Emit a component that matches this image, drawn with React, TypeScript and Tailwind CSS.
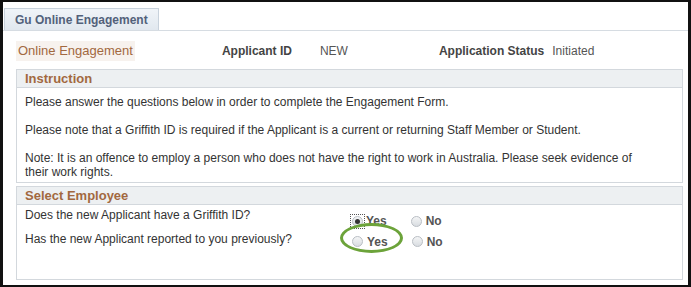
import React from "react";

function Radio({ checked, focused }: { checked?: boolean; focused?: boolean }) {
  return (
    <span className={`inline-flex items-center justify-center w-[13px] h-[13px] ${focused ? "outline outline-1 outline-dotted outline-[#555]" : ""}`}>
      <span className="w-[11px] h-[11px] rounded-full border border-[#b9bec4] bg-gradient-to-b from-[#f4f5f6] to-[#d9dde1] flex items-center justify-center">
        {checked && <span className="w-[5px] h-[5px] rounded-full bg-[#333]" />}
      </span>
    </span>
  );
}

function SectionHeader({ title }: { title: string }) {
  return (
    <div className="h-[18px] bg-[#edf0f2] border-b border-[#d3d8dd] px-[8px] flex items-center">
      <span className="text-[13px] font-bold text-[#a2683f]">{title}</span>
    </div>
  );
}

export default function App() {
  return (
    <div
      className="w-[691px] h-[287px] bg-white border-l-[3px] border-r-[3px] border-t-2 border-b-2 border-[#111] relative overflow-hidden"
      style={{ fontFamily: '"Liberation Sans", Arial, sans-serif' }}
    >
      {/* Tab strip */}
      <div className="pt-[6px] pl-[1px] pr-[1px] border-b border-[#d6dce2] flex">
        <div className="h-[22px] px-[10px] bg-gradient-to-b from-[#f0f4f8] to-[#e1e8ef] border border-b-0 border-[#c8d2dc] flex items-center">
          <span className="text-[12px] font-bold text-[#52617a]">Gu Online Engagement</span>
        </div>
      </div>

      {/* Page header */}
      <div className="flex items-center h-[38px] pt-[2px] pl-[13px] text-[12px]">
        <span className="bg-[#f7f2ee] px-[2px] text-[13px] text-[#a2683f]">Online Engagement</span>
        <span className="ml-[87px] font-bold text-[#444]">Applicant ID</span>
        <span className="ml-[28px] text-[#555]">NEW</span>
        <span className="ml-[91px] font-bold text-[#444]">Application Status</span>
        <span className="ml-[8px] text-[#555]">Initiated</span>
      </div>

      {/* Instruction */}
      <div className="ml-[13px] mr-[5px] border border-[#d3d8dd]">
        <SectionHeader title="Instruction" />
        <div className="pl-[8px] pr-[30px] pt-[7px] pb-[3px] text-[12px] leading-[14px] text-[#333] flex flex-col gap-[14px]">
          <p>Please answer the questions below in order to complete the Engagement Form.</p>
          <p>Please note that a Griffith ID is required if the Applicant is a current or returning Staff Member or Student.</p>
          <p>Note: It is an offence to employ a person who does not have the right to work in Australia. Please seek evidence of their work rights.</p>
        </div>
      </div>

      {/* Select Employee */}
      <div className="ml-[13px] mr-[5px] mt-[3px] h-[94px] border border-[#d3d8dd]">
        <SectionHeader title="Select Employee" />
        <div className="px-[8px] text-[12px] text-[#333]">
          <div className="flex items-center h-[20px]">
            <span className="w-[326px]">Does the new Applicant have a Griffith ID?</span>
            <span className="flex items-center gap-[2px] mt-[12px]">
              <Radio checked focused />
              <span className="font-bold text-[#555]">Yes</span>
            </span>
            <span className="flex items-center gap-[3px] ml-[23px] mt-[12px]">
              <Radio />
              <span className="font-bold text-[#555]">No</span>
            </span>
          </div>
          <div className="flex items-center h-[20px] mt-[4px]">
            <span className="w-[326px]">Has the new Applicant reported to you previously?</span>
            <span className="flex items-center gap-[3px] mt-[5px] relative">
              <Radio />
              <span className="font-bold text-[#555]">Yes</span>
              <span className="absolute left-[-11px] top-[-10px] w-[63px] h-[30px] rounded-[50%] border-[3px] border-[#6ca33a]" />
            </span>
            <span className="flex items-center gap-[3px] ml-[23px] mt-[5px]">
              <Radio />
              <span className="font-bold text-[#555]">No</span>
            </span>
          </div>
        </div>
      </div>
    </div>
  );
}
